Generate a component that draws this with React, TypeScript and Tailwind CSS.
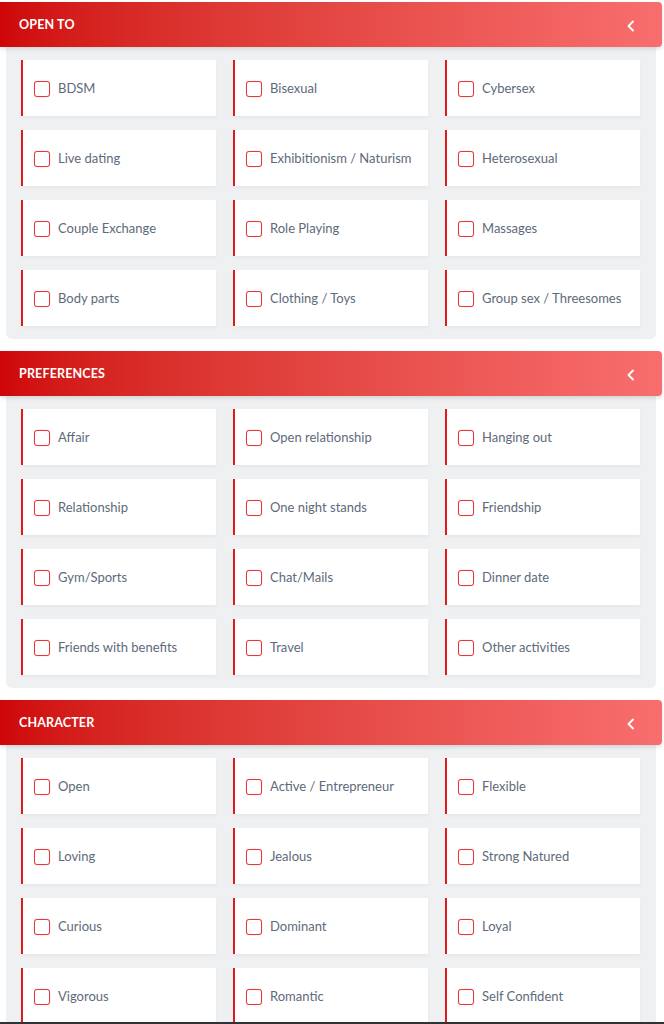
import React from "react";

const sections: { title: string; items: string[] }[] = [
  {
    title: "OPEN TO",
    items: [
      "BDSM",
      "Bisexual",
      "Cybersex",
      "Live dating",
      "Exhibitionism / Naturism",
      "Heterosexual",
      "Couple Exchange",
      "Role Playing",
      "Massages",
      "Body parts",
      "Clothing / Toys",
      "Group sex / Threesomes",
    ],
  },
  {
    title: "PREFERENCES",
    items: [
      "Affair",
      "Open relationship",
      "Hanging out",
      "Relationship",
      "One night stands",
      "Friendship",
      "Gym/Sports",
      "Chat/Mails",
      "Dinner date",
      "Friends with benefits",
      "Travel",
      "Other activities",
    ],
  },
  {
    title: "CHARACTER",
    items: [
      "Open",
      "Active / Entrepreneur",
      "Flexible",
      "Loving",
      "Jealous",
      "Strong Natured",
      "Curious",
      "Dominant",
      "Loyal",
      "Vigorous",
      "Romantic",
      "Self Confident",
    ],
  },
];

function Chevron() {
  return (
    <svg width="10" height="12" viewBox="0 0 10 12" fill="none">
      <polyline
        points="7,1.5 2.5,6 7,10.5"
        stroke="white"
        strokeWidth="1.8"
        strokeLinecap="round"
        strokeLinejoin="round"
      />
    </svg>
  );
}

function Section({ title, items }: { title: string; items: string[] }) {
  return (
    <div className="mb-[12px]">
      <div className="mr-[2px] h-[45px] flex items-center justify-between rounded-r-[4px] bg-gradient-to-r from-[#cf0508] to-[#f86e6e] shadow-[0_2px_4px_rgba(0,0,0,0.12)] pl-[19px] pr-[26px] pt-[2px] relative z-10">
        <span className="text-white font-bold text-[12.5px] tracking-[0.15px]">{title}</span>
        <Chevron />
      </div>
      <div className="ml-[6px] mr-[8px] bg-[#eef0f2] rounded-b-[6px] pl-[15px] pr-[16px] pt-[13px] pb-[13px] grid grid-cols-3 gap-x-[17px] gap-y-[14px]">
        {items.map((it) => (
          <div
            key={it}
            className="h-[56px] bg-white border-l-2 border-[#e01b1b] flex items-center pl-[11px] pt-[2px] shadow-[0_2px_3px_rgba(0,0,0,0.04)]"
          >
            <span className="w-[16px] h-[16px] shrink-0 rounded-[3px] border-[1.5px] border-[#e8353a] shadow-[0_0_1px_rgba(220,0,0,0.4)] bg-white" />
            <span className="ml-[8px] text-[13px] text-[#5e6a7a] whitespace-nowrap">{it}</span>
          </div>
        ))}
      </div>
    </div>
  );
}

export default function App() {
  return (
    <div
      className="w-[664px] h-[1024px] overflow-hidden bg-white pt-[2px] relative"
      style={{ fontFamily: "Lato, 'Noto Sans', sans-serif" }}
    >
      {sections.map((s) => (
        <Section key={s.title} title={s.title} items={s.items} />
      ))}
      <div className="absolute left-0 right-0 bottom-0 h-[2px] bg-[#2f3336]" />
    </div>
  );
}
